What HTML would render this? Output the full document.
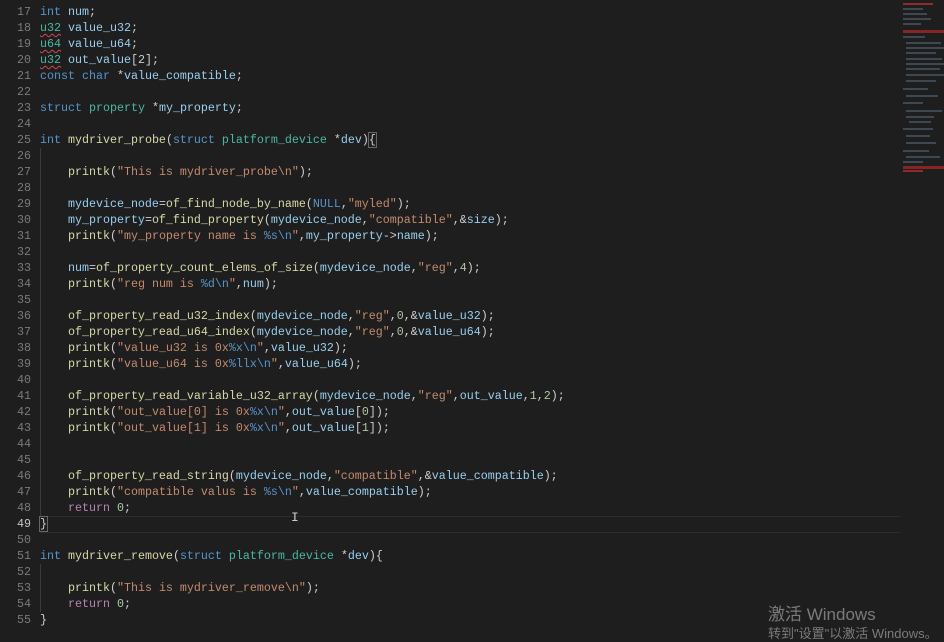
<!DOCTYPE html>
<html><head><meta charset="utf-8"><style>
html,body{margin:0;padding:0;width:944px;height:633px;overflow:hidden;background:#1e1e1e}
.ed{position:absolute;left:0;top:4px;font-family:"Liberation Mono",monospace;font-size:11.67px;line-height:16px;color:#cfcfcf}
.l{height:16px;position:relative;white-space:pre}
.n{display:inline-block;width:31px;text-align:right;color:#7a7a7a;margin-right:9px}
.n.cur{color:#c6c6c6}
.k{color:#5594cc}.f{color:#d8d8a8}.s{color:#c48a6e}.v{color:#98cfee}.t{color:#4ab8a2}.c{color:#b882b8}.d{color:#b0c8a4}
.sq{text-decoration:underline wavy #d04848;text-decoration-thickness:1px;text-underline-offset:2px}
.g{position:absolute;left:40px;width:1px;background:#3a3a3a}
.mm{position:absolute;left:903px;top:0;width:41px;height:633px}
.mm div{position:absolute;height:2px;background:#4a5a6a;opacity:.7}
.wm{position:absolute;left:768px;top:600px;font-family:"Liberation Sans","Noto Sans CJK SC",sans-serif;font-size:17px;color:#7b7b7b}
.wm2{position:absolute;left:768px;top:623px;font-family:"Liberation Sans","Noto Sans CJK SC",sans-serif;font-size:13px;color:#7b7b7b}
</style></head><body>
<div class="g" style="top:148px;height:368px"></div>
<div class="g" style="top:564px;height:48px"></div>
<div style="position:absolute;left:40px;top:516px;width:860px;height:17px;border-top:1px solid #2c2c2c;border-bottom:1px solid #2c2c2c;box-sizing:border-box"></div>
<div class="ed">
<div class="l"><span class="n">17</span><span class="k">int</span> <span class="v">num</span>;</div>
<div class="l"><span class="n">18</span><span class="t sq">u32</span> <span class="v">value_u32</span>;</div>
<div class="l"><span class="n">19</span><span class="t sq">u64</span> <span class="v">value_u64</span>;</div>
<div class="l"><span class="n">20</span><span class="t sq">u32</span> <span class="v">out_value</span>[2];</div>
<div class="l"><span class="n">21</span><span class="k">const</span> <span class="k">char</span> *<span class="v">value_compatible</span>;</div>
<div class="l"><span class="n">22</span></div>
<div class="l"><span class="n">23</span><span class="k">struct</span> <span class="t">property</span> *<span class="v">my_property</span>;</div>
<div class="l"><span class="n">24</span></div>
<div class="l"><span class="n">25</span><span class="k">int</span> <span class="f">mydriver_probe</span>(<span class="k">struct</span> <span class="t">platform_device</span> *<span class="v">dev</span>)<span style="outline:1px solid #666">{</span></div>
<div class="l"><span class="n">26</span></div>
<div class="l"><span class="n">27</span>    <span class="f">printk</span>(<span class="s">"This is mydriver_probe\n"</span>);</div>
<div class="l"><span class="n">28</span></div>
<div class="l"><span class="n">29</span>    <span class="v">mydevice_node</span>=<span class="f">of_find_node_by_name</span>(<span class="k">NULL</span>,<span class="s">"myled"</span>);</div>
<div class="l"><span class="n">30</span>    <span class="v">my_property</span>=<span class="f">of_find_property</span>(<span class="v">mydevice_node</span>,<span class="s">"compatible"</span>,&amp;<span class="v">size</span>);</div>
<div class="l"><span class="n">31</span>    <span class="f">printk</span>(<span class="s">"my_property name is </span><span class="k">%s\n</span><span class="s">"</span>,<span class="v">my_property</span>-&gt;<span class="v">name</span>);</div>
<div class="l"><span class="n">32</span></div>
<div class="l"><span class="n">33</span>    <span class="v">num</span>=<span class="f">of_property_count_elems_of_size</span>(<span class="v">mydevice_node</span>,<span class="s">"reg"</span>,<span class="d">4</span>);</div>
<div class="l"><span class="n">34</span>    <span class="f">printk</span>(<span class="s">"reg num is </span><span class="k">%d\n</span><span class="s">"</span>,<span class="v">num</span>);</div>
<div class="l"><span class="n">35</span></div>
<div class="l"><span class="n">36</span>    <span class="f">of_property_read_u32_index</span>(<span class="v">mydevice_node</span>,<span class="s">"reg"</span>,<span class="d">0</span>,&amp;<span class="v">value_u32</span>);</div>
<div class="l"><span class="n">37</span>    <span class="f">of_property_read_u64_index</span>(<span class="v">mydevice_node</span>,<span class="s">"reg"</span>,<span class="d">0</span>,&amp;<span class="v">value_u64</span>);</div>
<div class="l"><span class="n">38</span>    <span class="f">printk</span>(<span class="s">"value_u32 is 0x</span><span class="k">%x\n</span><span class="s">"</span>,<span class="v">value_u32</span>);</div>
<div class="l"><span class="n">39</span>    <span class="f">printk</span>(<span class="s">"value_u64 is 0x</span><span class="k">%llx\n</span><span class="s">"</span>,<span class="v">value_u64</span>);</div>
<div class="l"><span class="n">40</span></div>
<div class="l"><span class="n">41</span>    <span class="f">of_property_read_variable_u32_array</span>(<span class="v">mydevice_node</span>,<span class="s">"reg"</span>,<span class="v">out_value</span>,<span class="d">1</span>,<span class="d">2</span>);</div>
<div class="l"><span class="n">42</span>    <span class="f">printk</span>(<span class="s">"out_value[0] is 0x</span><span class="k">%x\n</span><span class="s">"</span>,<span class="v">out_value</span>[<span class="d">0</span>]);</div>
<div class="l"><span class="n">43</span>    <span class="f">printk</span>(<span class="s">"out_value[1] is 0x</span><span class="k">%x\n</span><span class="s">"</span>,<span class="v">out_value</span>[<span class="d">1</span>]);</div>
<div class="l"><span class="n">44</span></div>
<div class="l"><span class="n">45</span></div>
<div class="l"><span class="n">46</span>    <span class="f">of_property_read_string</span>(<span class="v">mydevice_node</span>,<span class="s">"compatible"</span>,&amp;<span class="v">value_compatible</span>);</div>
<div class="l"><span class="n">47</span>    <span class="f">printk</span>(<span class="s">"compatible valus is </span><span class="k">%s\n</span><span class="s">"</span>,<span class="v">value_compatible</span>);</div>
<div class="l"><span class="n">48</span>    <span class="c">return</span> <span class="d">0</span>;</div>
<div class="l"><span class="n cur">49</span><span style="outline:1px solid #666">}</span></div>
<div class="l"><span class="n">50</span></div>
<div class="l"><span class="n">51</span><span class="k">int</span> <span class="f">mydriver_remove</span>(<span class="k">struct</span> <span class="t">platform_device</span> *<span class="v">dev</span>){</div>
<div class="l"><span class="n">52</span></div>
<div class="l"><span class="n">53</span>    <span class="f">printk</span>(<span class="s">"This is mydriver_remove\n"</span>);</div>
<div class="l"><span class="n">54</span>    <span class="c">return</span> <span class="d">0</span>;</div>
<div class="l"><span class="n">55</span>}</div>
</div>
<div style="position:absolute;left:291px;top:510px;color:#ccc;font-family:'Liberation Mono',monospace;font-size:13px">I</div>
<div class="mm">
<div style="left:0;top:3px;width:30px;background:#c03030"></div>
<div style="left:0;top:8px;width:20px"></div>
<div style="left:0;top:13px;width:24px"></div>
<div style="left:0;top:18px;width:28px"></div>
<div style="left:0;top:23px;width:18px"></div>
<div style="left:0;top:30px;width:41px;background:#b02828;height:3px"></div>
<div style="left:0;top:36px;width:22px"></div>
<div style="left:3px;top:42px;width:35px"></div>
<div style="left:3px;top:47px;width:38px"></div>
<div style="left:3px;top:52px;width:30px"></div>
<div style="left:3px;top:58px;width:36px"></div>
<div style="left:3px;top:63px;width:38px"></div>
<div style="left:3px;top:68px;width:34px"></div>
<div style="left:3px;top:74px;width:38px"></div>
<div style="left:3px;top:80px;width:30px"></div>
<div style="left:0;top:88px;width:25px"></div>
<div style="left:3px;top:95px;width:32px"></div>
<div style="left:0;top:102px;width:20px"></div>
<div style="left:3px;top:110px;width:36px"></div>
<div style="left:3px;top:116px;width:28px"></div>
<div style="left:6px;top:121px;width:22px"></div>
<div style="left:0;top:128px;width:30px"></div>
<div style="left:3px;top:135px;width:24px"></div>
<div style="left:3px;top:142px;width:30px"></div>
<div style="left:0;top:150px;width:26px"></div>
<div style="left:3px;top:156px;width:34px"></div>
<div style="left:0;top:161px;width:20px"></div>
<div style="left:0;top:166px;width:41px;background:#b02828;height:3px"></div>
<div style="left:0;top:170px;width:20px;background:#c03030"></div>
</div>
<div class="wm">激活 Windows</div>
<div class="wm2">转到"设置"以激活 Windows。</div>
</body></html>
